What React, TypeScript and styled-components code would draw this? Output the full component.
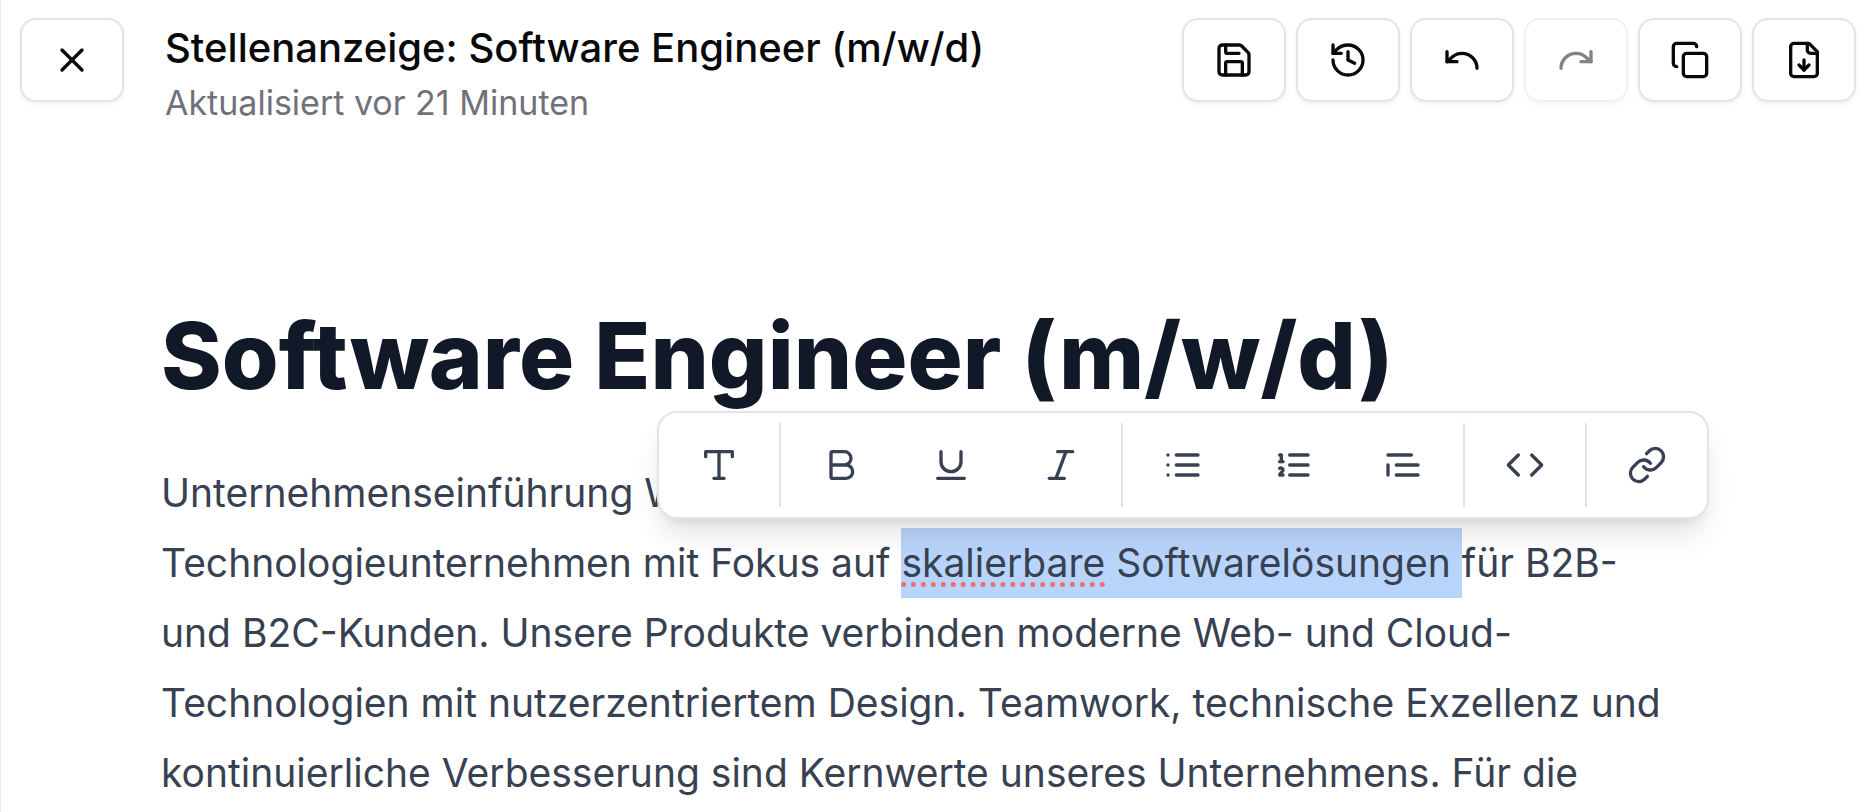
import React from 'react';
import styled, { createGlobalStyle } from 'styled-components';

const Global = createGlobalStyle`
  *, *::before, *::after { box-sizing: border-box; }
  body {
    margin: 0;
    background: #ffffff;
    font-family: Inter, "Liberation Sans", sans-serif;
  }
`;

const Panel = styled.main`
  min-height: 100vh;
  border-left: 1px solid #ebebeb;
  overflow-x: hidden;
`;

const Header = styled.header`
  display: flex;
  align-items: flex-start;
  padding: 18px 18px 0 19px;
`;

const Heading = styled.div`
  flex: 1;
  margin-left: 41px;
  white-space: nowrap;
`;

const Title = styled.h2`
  margin: 0;
  padding-top: 4px;
  font-size: 40px;
  line-height: 52px;
  font-weight: 500;
  color: #09090b;
`;

const Updated = styled.p`
  margin: 0;
  font-size: 34px;
  line-height: 58px;
  color: #71717a;
`;

const Actions = styled.div`
  display: flex;
  gap: 10px;
`;

const IconButton = styled.button`
  display: flex;
  align-items: center;
  justify-content: center;
  flex: none;
  width: 104px;
  height: 84px;
  padding: 0;
  border: 2px solid #e4e4e4;
  border-radius: 16px;
  background: #ffffff;
  color: #09090b;
  box-shadow: 0 2px 4px rgba(0, 0, 0, 0.06);

  &:disabled { opacity: 0.5; }
`;

const Editor = styled.article`
  position: relative;
  margin: 174px 160px 0;
`;

const DocTitle = styled.h1`
  margin: 0;
  font-size: 92px;
  line-height: 100px;
  font-weight: 800;
  color: #111827;
  white-space: nowrap;
`;

const Paragraph = styled.p`
  margin: 52px 0 0;
  font-size: 39px;
  line-height: 70px;
  color: #374151;
  white-space: nowrap;
`;

const Selected = styled.mark`
  padding: 11px 0 12px;
  background: #b9d4fb;
  color: inherit;
`;

const Misspelled = styled.span`
  text-decoration: underline dotted #e9706b 5px;
  text-underline-offset: 5px;
`;

const Bubble = styled.div`
  position: absolute;
  top: 105px;
  left: 496px;
  display: flex;
  gap: 10px;
  padding: 10px;
  border: 2px solid #e4e4e4;
  border-radius: 20px;
  background: #ffffff;
  box-shadow: 0 20px 30px -6px rgba(0, 0, 0, 0.12), 0 8px 12px -8px rgba(0, 0, 0, 0.12);
`;

const Tool = styled.button`
  display: flex;
  align-items: center;
  justify-content: center;
  width: 100px;
  height: 84px;
  padding: 0;
  border: 0;
  border-radius: 12px;
  background: transparent;
  color: #374151;
`;

const Divider = styled.span`
  width: 2px;
  background: #e4e4e4;
`;

const Glyph = styled.svg`
  width: 40px;
  height: 40px;
  fill: none;
  stroke: currentColor;
  stroke-width: 2;
  stroke-linecap: round;
  stroke-linejoin: round;
`;

const Icon = ({ paths }: { paths: string[] }) => (
  <Glyph viewBox="0 0 24 24" aria-hidden="true">
    {paths.map((d) => <path key={d} d={d} />)}
  </Glyph>
);

interface Action { label: string; paths: string[]; disabled?: boolean }

const close: Action = { label: 'Schließen', paths: ['M18 6 6 18', 'M6 6l12 12'] };

const actions: Action[] = [
  { label: 'Speichern', paths: ['M15.2 3a2 2 0 0 1 1.4.6l3.8 3.8a2 2 0 0 1 .6 1.4V19a2 2 0 0 1-2 2H5a2 2 0 0 1-2-2V5a2 2 0 0 1 2-2z', 'M17 21v-7a1 1 0 0 0-1-1H8a1 1 0 0 0-1 1v7', 'M7 3v4a1 1 0 0 0 1 1h7'] },
  { label: 'Verlauf', paths: ['M3 12a9 9 0 1 0 9-9 9.75 9.75 0 0 0-6.74 2.74L3 8', 'M3 3v5h5', 'M12 7v5l4 2'] },
  { label: 'Rückgängig', paths: ['M3 7v6h6', 'M21 17a9 9 0 0 0-9-9 9 9 0 0 0-6 2.3L3 13'] },
  { label: 'Wiederholen', disabled: true, paths: ['M21 7v6h-6', 'M3 17a9 9 0 0 1 9-9 9 9 0 0 1 6 2.3l3 2.7'] },
  { label: 'Kopieren', paths: ['M10 8h10a2 2 0 0 1 2 2v10a2 2 0 0 1-2 2H10a2 2 0 0 1-2-2V10a2 2 0 0 1 2-2z', 'M4 16c-1.1 0-2-.9-2-2V4c0-1.1.9-2 2-2h10c1.1 0 2 .9 2 2'] },
  { label: 'Herunterladen', paths: ['M15 2H6a2 2 0 0 0-2 2v16a2 2 0 0 0 2 2h12a2 2 0 0 0 2-2V7Z', 'M14 2v4a2 2 0 0 0 2 2h4', 'M12 18v-6', 'M9 15l3 3 3-3'] },
];

const toolGroups: Action[][] = [
  [{ label: 'Textstil', paths: ['M4 7V4h16v3', 'M9 20h6', 'M12 4v16'] }],
  [
    { label: 'Fett', paths: ['M6 12h9a4 4 0 0 1 0 8H7a1 1 0 0 1-1-1V5a1 1 0 0 1 1-1h7a4 4 0 0 1 0 8'] },
    { label: 'Unterstrichen', paths: ['M6 4v6a6 6 0 0 0 12 0V4', 'M4 20h16'] },
    { label: 'Kursiv', paths: ['M19 4h-9', 'M14 20H5', 'M15 4 9 20'] },
  ],
  [
    { label: 'Aufzählung', paths: ['M8 6h13', 'M8 12h13', 'M8 18h13', 'M3 6h.01', 'M3 12h.01', 'M3 18h.01'] },
    { label: 'Nummerierung', paths: ['M10 6h11', 'M10 12h11', 'M10 18h11', 'M4 6h1v4', 'M4 10h2', 'M6 18H4c0-1 2-2 2-3s-1-1.5-2-1'] },
    { label: 'Zitat', paths: ['M17 6H3', 'M21 12H8', 'M21 18H8', 'M3 12v6'] },
  ],
  [{ label: 'Code', paths: ['M16 18l6-6-6-6', 'M8 6l-6 6 6 6'] }],
  [{ label: 'Link', paths: ['M10 13a5 5 0 0 0 7.54.54l3-3a5 5 0 0 0-7.07-7.07l-1.72 1.71', 'M14 11a5 5 0 0 0-7.54-.54l-3 3a5 5 0 0 0 7.07 7.07l1.71-1.71'] }],
];

export default function App() {
  return (
    <Panel>
      <Global />
      <Header>
        <IconButton type="button" aria-label={close.label}><Icon paths={close.paths} /></IconButton>
        <Heading>
          <Title>Stellenanzeige: Software Engineer (m/w/d)</Title>
          <Updated>Aktualisiert vor 21 Minuten</Updated>
        </Heading>
        <Actions>
          {actions.map((a) => (
            <IconButton key={a.label} type="button" aria-label={a.label} disabled={a.disabled}>
              <Icon paths={a.paths} />
            </IconButton>
          ))}
        </Actions>
      </Header>
      <Editor>
        <DocTitle>Software Engineer (m/w/d)</DocTitle>
        <Paragraph>
          Unternehmenseinführung Wir<br />
          Technologieunternehmen mit Fokus auf{' '}
          <Selected><Misspelled>skalierbare</Misspelled> Softwarelösungen </Selected>für B2B-<br />
          und B2C-Kunden. Unsere Produkte verbinden moderne Web- und Cloud-<br />
          Technologien mit nutzerzentriertem Design. Teamwork, technische Exzellenz und<br />
          kontinuierliche Verbesserung sind Kernwerte unseres Unternehmens. Für die
        </Paragraph>
        <Bubble role="toolbar" aria-label="Formatierung">
          {toolGroups.map((group, i) => (
            <React.Fragment key={group[0].label}>
              {i > 0 && <Divider />}
              {group.map((t) => (
                <Tool key={t.label} type="button" aria-label={t.label}><Icon paths={t.paths} /></Tool>
              ))}
            </React.Fragment>
          ))}
        </Bubble>
      </Editor>
    </Panel>
  );
}
